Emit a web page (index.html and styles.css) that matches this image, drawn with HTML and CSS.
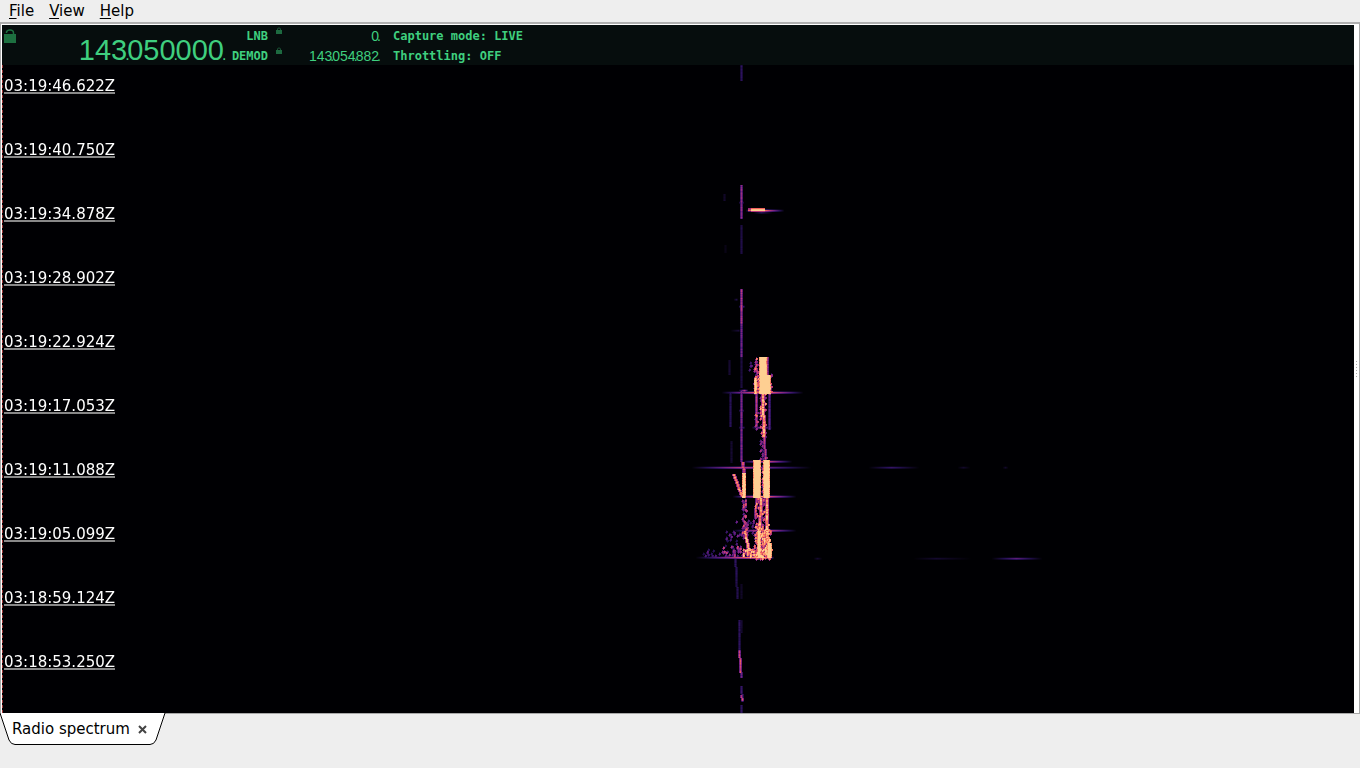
FILE: index.html
```html
<!DOCTYPE html>
<html lang="en">
<head>
  <meta charset="utf-8">
  <title>Radio spectrum</title>
  <link rel="stylesheet" href="styles.css">
</head>
<body>
  <nav class="menubar">
    <button type="button"><u>F</u>ile</button>
    <button type="button"><u>V</u>iew</button>
    <button type="button"><u>H</u>elp</button>
  </nav>

  <main class="frame">
    <section class="spectrum">
      <header class="tuner">
        <svg class="lock-main" width="12" height="15" viewBox="0 0 12 15">
          <path d="M2.5 4V3Q3 1 6 1Q9.5 1 9.5 4V7" fill="none" stroke="#1d7040" stroke-width="1.5"/>
          <rect x="0" y="5" width="12" height="9" fill="#1d7040"/>
        </svg>
        <div class="freq">143<i>.</i>050<i>.</i>000<i>.</i></div>
        <div class="names">
          <span>LNB</span>
          <span>DEMOD</span>
        </div>
        <div class="locks">
          <svg width="6" height="8" viewBox="0 0 6 8">
            <path d="M1.5 3V2Q1.5 1 3 1Q4.5 1 4.5 2V3" fill="none" stroke="#1a5034"/>
            <rect y="3" width="6" height="4" fill="#1d6a40"/>
          </svg>
          <svg width="6" height="8" viewBox="0 0 6 8">
            <path d="M1.5 3V2Q1.5 1 3 1Q4.5 1 4.5 2V3" fill="none" stroke="#1a5034"/>
            <rect y="3" width="6" height="4" fill="#1d6a40"/>
          </svg>
        </div>
        <div class="values">
          <span>0<i>.</i></span>
          <span>143<i>.</i>054<i>.</i>882<i>.</i></span>
        </div>
        <div class="status">
          <span>Capture mode: LIVE</span>
          <span>Throttling: OFF</span>
        </div>
      </header>

      <div class="waterfall">
        <canvas id="waterfall"></canvas>
        <ul class="times">
          <li>03:19:46.622Z</li>
          <li>03:19:40.750Z</li>
          <li>03:19:34.878Z</li>
          <li>03:19:28.902Z</li>
          <li>03:19:22.924Z</li>
          <li>03:19:17.053Z</li>
          <li>03:19:11.088Z</li>
          <li>03:19:05.099Z</li>
          <li>03:18:59.124Z</li>
          <li>03:18:53.250Z</li>
        </ul>
      </div>
    </section>
    <div class="splitter"><b></b><b></b><b></b><b></b><b></b><b></b></div>
  </main>

  <footer class="tabs">
    <div class="tab">
      <svg class="tab-shape" width="166" height="33" viewBox="0 0 166 33">
        <path d="M0 0L9 27Q11 31.5 15 31.5H150Q154 31.5 156 27L165 0" fill="#fff" stroke="#000"/>
      </svg>
      <button type="button" class="tab-name">Radio spectrum</button>
      <button type="button" class="tab-close" aria-label="Close">
        <svg width="9" height="9" viewBox="0 0 9 9">
          <path d="M1 1L8 8M8 1L1 8" stroke="#444" stroke-width="2"/>
        </svg>
      </button>
    </div>
  </footer>

  <script src="waterfall.js"></script>
</body>
</html>
```
FILE: styles.css
```css
* {
  box-sizing: border-box;
}

body {
  margin: 0;
  height: 100vh;
  display: flex;
  flex-direction: column;
  background: #eee;
  color: #000;
  font-family: "DejaVu Sans", sans-serif;
  font-size: 15px;
}

button {
  margin: 0;
  padding: 0;
  border: none;
  background: none;
  font: inherit;
  color: inherit;
}

i {
  font-style: normal;
}

.menubar {
  display: flex;
  gap: 15px;
  height: 22px;
  padding: 0 9px;
}

.menubar u {
  text-underline-offset: 2px;
}

/* main area */
.frame {
  flex: 1;
  display: flex;
  min-height: 0;
  background: #fff;
  border: 1px solid #a8a8a8;
  border-top: 2px solid #b0b0b0;
  padding: 1px 0 0 1px;
}

.spectrum {
  flex: 1;
  min-width: 0;
  display: flex;
  flex-direction: column;
}

.splitter {
  width: 5px;
  display: flex;
  flex-direction: column;
  align-items: center;
  justify-content: center;
  gap: 2px;
}

.splitter b {
  width: 1px;
  height: 1px;
  background: #aaa;
}

/* tuner bar */
.tuner {
  display: flex;
  height: 40px;
  background: #060d0d;
  color: #3fcf7f;
}

.lock-main {
  margin: 4px 0 0 2px;
}

.freq {
  width: 208px;
  padding-top: 5px;
  text-align: right;
  font: 29px/40px "Liberation Sans", sans-serif;
}

/* group separators take no room between the digits */
.tuner i {
  display: inline-block;
  width: 0;
  line-height: 1;
  text-indent: -2px;
}

.freq i {
  font-size: 16px;
}

.names,
.values,
.status {
  display: flex;
  flex-direction: column;
  padding-top: 1px;
  font: bold 12px/20px "DejaVu Sans Mono", monospace;
}

.names {
  width: 44px;
  text-align: right;
}

.locks {
  display: flex;
  flex-direction: column;
  gap: 12px;
  padding: 2px 0 0 8px;
}

.values {
  width: 97px;
  text-align: right;
  font: 14px/20px "Liberation Sans", sans-serif;
}

.status {
  padding-left: 14px;
}

/* waterfall */
.waterfall {
  position: relative;
  flex: 1;
  min-height: 0;
  overflow: hidden;
  background: #000003;
}

.waterfall canvas {
  display: block;
  width: 100%;
  height: 100%;
}

.times {
  position: absolute;
  top: 0;
  left: 0;
  height: 100%;
  margin: 0;
  padding: 15px 0 0 1px;
  border-left: 1px dashed #a03838;
  list-style: none;
  color: #fff;
}

.times li {
  line-height: 12px;
  border-bottom: 2px solid #888;
  margin-bottom: 50px;
}

/* tab strip */
.tabs {
  height: 54px;
}

.tab {
  position: relative;
  display: inline-flex;
  align-items: center;
  gap: 8px;
  height: 30px;
  padding-left: 12px;
}

.tab-shape {
  position: absolute;
  top: -1px;
  left: 0;
}

.tab-name,
.tab-close {
  position: relative;
}

.tab-close {
  display: flex;
}
```
FILE: waterfall.js
```js
var canvas = document.getElementById('waterfall');
var w = canvas.width = canvas.clientWidth;
var h = canvas.height = canvas.clientHeight;
var carrier = Math.round(w / 2) + 63; // all x below are relative to the carrier
var power = new Float32Array(w * h);

// magma-like palette: level, r, g, b
var palette = [
  [0, 0, 0, 3], [0.2, 40, 17, 90], [0.4, 114, 31, 129], [0.6, 183, 55, 121],
  [0.75, 241, 96, 93], [0.88, 254, 159, 109], [1, 254, 207, 146]
];

var seed = 7;
function random() {
  seed = (seed * 16807) % 2147483647;
  return seed / 2147483647;
}

function put(x, y, v) {
  x = Math.round(x) + carrier;
  y = Math.round(y);
  if (x < 0 || y < 0 || x >= w || y >= h) return;
  power[y * w + x] = Math.max(power[y * w + x], Math.min(v, 1));
}

// vertical or slanted trace with soft sides
function trace(x0, y0, x1, y1, v, wide) {
  for (var y = y0; y <= y1; y++) {
    var x = x0 + (x1 - x0) * (y - y0) / Math.max(y1 - y0, 1);
    var level = v * (0.85 + random() * 0.3);
    for (var i = 0; i < wide; i++) put(x + i, y, level);
    put(x - 1, y, level * 0.6);
    put(x + wide, y, level * 0.6);
  }
}

// horizontal burst, brightest at peak
function burst(x0, x1, y, peak, v) {
  for (var x = x0; x <= x1; x++) {
    var d = x < peak ? (peak - x) / (peak - x0 + 1) : (x - peak) / (x1 - peak + 1);
    put(x, y, v * (1 - d));
    put(x, y + 1, v * (1 - d) * 0.6);
    put(x, y - 1, v * (1 - d) * 0.25);
  }
}

function fill(x0, y0, x1, y1) {
  for (var y = y0; y <= y1; y++) {
    for (var x = x0; x <= x1; x++) {
      var edge = x === x0 || x === x1;
      put(x, y, edge ? 0.75 + random() * 0.25 : 1);
    }
  }
}

// speckled area, density is the share of lit spots
function speckle(x0, y0, x1, y1, density, v) {
  var spots = (x1 - x0) * (y1 - y0) * density / 4;
  for (var i = 0; i < spots; i++) {
    var x = Math.round(x0 + random() * (x1 - x0));
    var y = Math.round(y0 + random() * (y1 - y0));
    var level = v * (0.45 + random() * 0.6);
    put(x, y, level);
    put(x, y + 1, level);
    put(x + 1, y, level * 0.9);
    put(x + 1, y + 1, level * 0.8);
    put(x, y + 2, level * 0.6);
    put(x - 1, y + 1, level * 0.5);
    put(x, y - 1, level * 0.4);
  }
}

// carrier
trace(0, 0, 0, 15, 0.2, 1);
trace(0, 120, 0, 153, 0.48, 1);
trace(0, 160, 0, 188, 0.15, 1);
trace(0, 224, 0, 258, 0.56, 1);
trace(0, 259, 0, 291, 0.4, 1);
trace(0, 292, 0, 322, 0.13, 1);
trace(0, 326, 0, 396, 0.44, 1);
burst(-2, 2, 137, 0, 0.4);
burst(-2, 3, 241, 0, 0.5);
burst(-2, 2, 345, 0, 0.45);
burst(-2, 3, 362, 0, 0.4);

// sidebands
trace(-17, 129, -17, 135, 0.09, 1);
trace(-16, 180, -16, 187, 0.04, 1);
trace(-12, 295, -12, 309, 0.1, 1);
trace(-11, 328, -11, 361, 0.18, 1);
trace(-10, 376, -10, 397, 0.1, 1);
burst(-10, -2, 265, -3, 0.12);
burst(-7, -4, 234, -5, 0.15);

// short echo
burst(5, 42, 145, 18, 1);
for (var ex = 7; ex < 24; ex++) {
  put(ex, 143, ex < 10 ? 0.5 : 0.75);
  put(ex, 144, ex < 10 ? 0.6 : 0.95);
  put(ex, 145, ex < 10 ? 0.75 : 1);
  put(ex, 146, ex < 10 ? 0.3 : 0.6);
}
burst(13, 30, 147, 20, 0.2);

// first strong echo
fill(18, 292, 25, 328);
fill(21, 310, 29, 328);
fill(13, 313, 15, 328);
speckle(13, 292, 18, 328, 1, 0.85);
trace(26, 292, 26, 310, 0.6, 1);
speckle(28, 307, 30, 328, 1, 0.8);
speckle(8, 296, 10, 306, 0.7, 0.45);
burst(-19, 61, 327, 22, 0.9);
burst(-2, 6, 325, 3, 0.6);

// tail
trace(21, 328, 22, 371, 0.9, 2);
speckle(19, 328, 24, 371, 1, 0.9);
trace(23, 371, 24, 397, 0.6, 1);
speckle(18, 370, 25, 397, 0.5, 0.55);
trace(15, 328, 15, 361, 0.58, 1);
speckle(14, 345, 16, 363, 1, 0.8);
trace(28, 328, 28, 364, 0.35, 1);
burst(11, 30, 362, 20, 0.55);

// second strong echo
fill(12, 395, 19, 432);
fill(22, 395, 28, 432);
speckle(20, 395, 22, 432, 0.8, 0.8);
fill(1, 408, 4, 432);
trace(1, 397, 2, 408, 0.65, 2);
trace(-8, 409, 0, 431, 0.8, 2);
burst(2, 50, 396, 24, 0.75);
burst(-49, 69, 402, 0, 0.6);
burst(-8, 54, 431, 20, 0.9);
burst(-8, 54, 465, 22, 0.75);

// breakup
speckle(1, 433, 5, 468, 1.3, 0.7);
speckle(13, 433, 27, 493, 0.7, 0.85);
trace(15, 433, 14, 452, 0.6, 1);
trace(19, 433, 18, 465, 0.85, 2);
trace(25, 433, 25, 475, 0.88, 2);
speckle(14, 458, 29, 493, 0.9, 1);
speckle(-5, 455, 14, 472, 0.35, 0.5);
trace(3, 466, 7, 485, 0.9, 2);
fill(16, 466, 19, 492);
fill(26, 478, 30, 492);
speckle(20, 466, 29, 492, 1, 1);
speckle(1, 484, 30, 491, 1.6, 1);
speckle(-16, 461, 0, 490, 0.18, 0.4);
speckle(-19, 481, 0, 491, 0.6, 0.65);
speckle(-42, 484, -19, 491, 0.25, 0.35);
burst(-45, 32, 492, 22, 1);

// remote bursts
burst(128, 177, 402, 150, 0.24);
burst(217, 228, 402, 222, 0.09);
burst(262, 266, 402, 264, 0.09);
burst(251, 300, 493, 275, 0.35);
burst(173, 229, 493, 195, 0.1);
burst(73, 80, 493, 76, 0.1);

// drifting trace at the bottom
trace(-6, 494, -5, 510, 0.2, 1);
trace(-5, 511, -4, 533, 0.17, 1);
trace(0, 519, 0, 533, 0.08, 1);
trace(0, 555, 0, 567, 0.1, 1);
trace(-2, 555, -2, 584, 0.2, 1);
trace(-2, 585, -1, 600, 0.6, 1);
trace(-1, 594, -1, 607, 0.7, 1);
trace(0, 607, 0, 612, 0.4, 1);
trace(0, 621, 1, 636, 0.25, 1);
trace(0, 630, 1, 635, 0.65, 1);
trace(0, 640, 0, 648, 0.2, 1);

function colour(v) {
  for (var i = 1; i < palette.length - 1 && v > palette[i][0]; i++);
  var a = palette[i - 1], b = palette[i];
  var t = (v - a[0]) / (b[0] - a[0]);
  return [1, 2, 3].map(function (c) { return a[c] + (b[c] - a[c]) * t; });
}

var ctx = canvas.getContext('2d');
var image = ctx.createImageData(w, h);
for (var p = 0; p < w * h; p++) {
  var rgb = colour(power[p]);
  image.data[p * 4] = rgb[0];
  image.data[p * 4 + 1] = rgb[1];
  image.data[p * 4 + 2] = rgb[2];
  image.data[p * 4 + 3] = 255;
}
ctx.putImageData(image, 0, 0);
```
